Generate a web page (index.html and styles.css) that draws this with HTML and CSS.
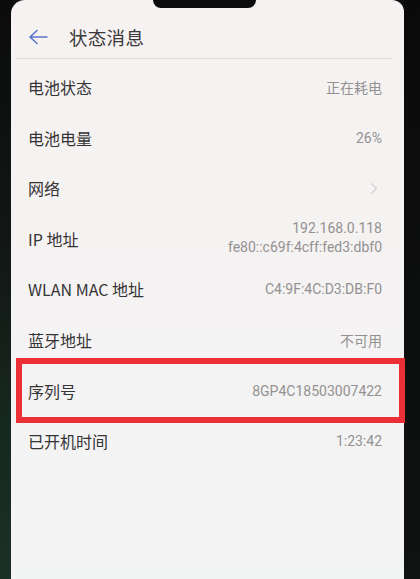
FILE: index.html
```html
<!DOCTYPE html>
<html lang="zh">
<head>
<meta charset="utf-8">
<link rel="stylesheet" href="styles.css">
</head>
<body>
<div class="phone">
  <div class="bezel-left"></div>
  <div class="screen">
    <div class="notch"></div>
    <div class="header">
      <svg class="back" width="20" height="16" viewBox="0 0 20 16"><path d="M9 1.5 L2 8 L9 14.5 M2 8 H19" fill="none" stroke="#5b74c9" stroke-width="1.6" stroke-linecap="round" stroke-linejoin="round"/></svg>
      <span class="title">状态消息</span>
    </div>
    <div class="list">
      <div class="row"><span class="label">电池状态</span><span class="value">正在耗电</span></div>
      <div class="row"><span class="label">电池电量</span><span class="value">26%</span></div>
      <div class="row"><span class="label">网络</span><svg class="chev" width="8" height="13" viewBox="0 0 8 13"><path d="M1.5 1.5 L6.5 6.5 L1.5 11.5" fill="none" stroke="#d4d2d2" stroke-width="1.4"/></svg></div>
      <div class="row"><span class="label">IP 地址</span><span class="value multi"><span>192.168.0.118</span><span>fe80::c69f:4cff:fed3:dbf0</span></span></div>
      <div class="row"><span class="label">WLAN MAC 地址</span><span class="value">C4:9F:4C:D3:DB:F0</span></div>
      <div class="row"><span class="label">蓝牙地址</span><span class="value">不可用</span></div>
      <div class="row marked"><span class="label">序列号</span><span class="value">8GP4C18503007422</span></div>
      <div class="row"><span class="label">已开机时间</span><span class="value">1:23:42</span></div>
    </div>
  </div>
  <div class="bezel-right"></div>
</div>
</body>
</html>
```
FILE: styles.css
```css
html, body {
  margin: 0;
  padding: 0;
  width: 420px;
  height: 579px;
  overflow: hidden;
  font-family: "Noto Sans CJK SC", Roboto, "Noto Sans", sans-serif;
}
.phone {
  display: flex;
  width: 420px;
  height: 579px;
  background: #0e0f0f;
}
.bezel-left {
  width: 11px;
  flex: none;
  background: linear-gradient(180deg, #0b0b0b 0%, #121816 45%, #17291f 75%, #1b3027 100%);
}
.bezel-right {
  flex: 1;
  background: linear-gradient(180deg, #0a0a0a 0%, #0f1211 100%);
}
.screen {
  position: relative;
  width: 393px;
  flex: none;
  background: linear-gradient(180deg, #f6f2f2 0%, #f5f2f2 40%, #f3f4f4 100%);
  border-top-left-radius: 14px;
  border-top-right-radius: 12px;
}
.notch {
  position: absolute;
  left: 142px;
  top: 0;
  width: 103px;
  height: 8px;
  background: #0c0c0c;
  border-radius: 0 0 10px 10px;
}
.header {
  display: flex;
  align-items: center;
  height: 59px;
  padding: 15px 0 0 12px;
  box-sizing: border-box;
  margin: 0 12px 0 5px;
  border-bottom: 1px solid #e2dede;
}
.back {
  display: block;
}
.title {
  margin-left: 21px;
  font-size: 18.5px;
  color: #3a3838;
  letter-spacing: 0.3px;
}
.list {
  display: flex;
  flex-direction: column;
  padding-top: 2.7px;
}
.row {
  position: relative;
  display: flex;
  align-items: center;
  justify-content: space-between;
  height: 50.6px;
  padding: 0 22px 0 17px;
}
.label {
  font-size: 16px;
  color: #353434;
}
.value {
  font-size: 14px;
  color: #939191;
  text-align: right;
  font-family: Roboto, "Noto Sans CJK SC", sans-serif;
}
.value.multi {
  display: flex;
  flex-direction: column;
  line-height: 19px;
  font-size: 14px;
  margin-top: -2px;
}
.chev {
  display: block;
  margin-right: 4px;
}
.marked::after {
  content: "";
  position: absolute;
  left: 5px;
  right: -1px;
  top: -7px;
  bottom: -7px;
  border: 6px solid #ec2f36;
}
```
